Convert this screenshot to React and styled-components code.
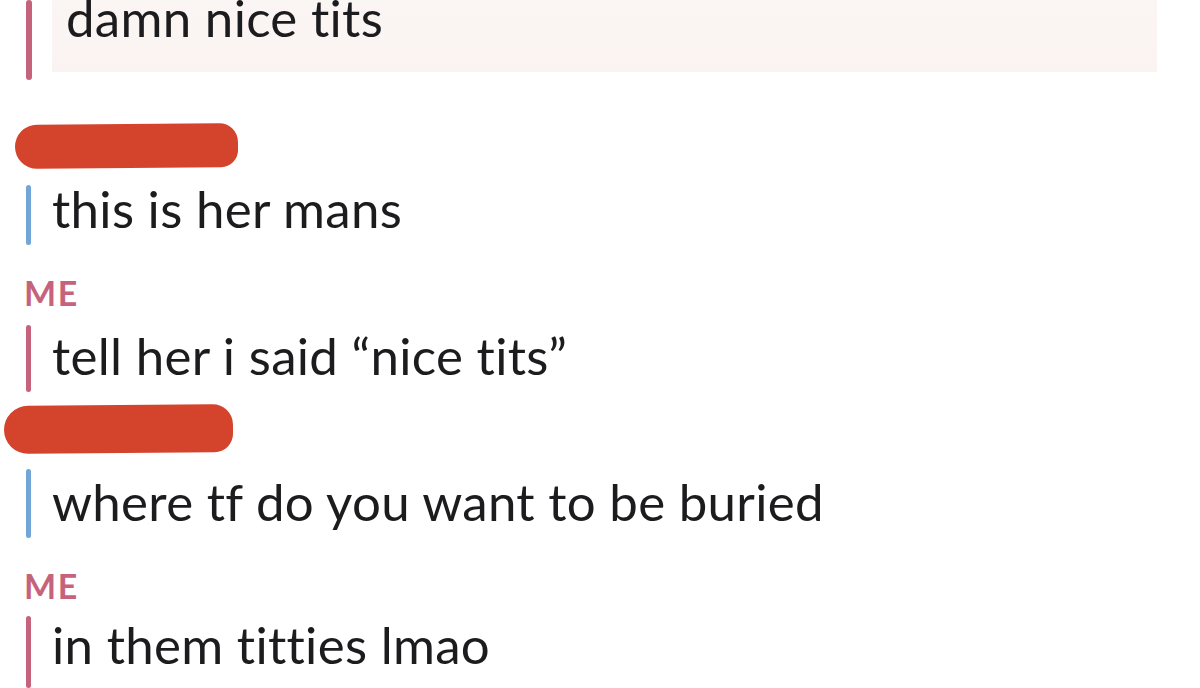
import React from "react";
import styled, { createGlobalStyle } from "styled-components";

const GlobalStyle = createGlobalStyle`
  html, body {
    margin: 0;
    padding: 0;
    background: #ffffff;
    overflow: hidden;
  }
  body {
    font-family: "Lato", "Open Sans", sans-serif;
    color: #1c1c1e;
  }
`;

const colors = {
  me: "#c6637c",
  them: "#72a6d8",
  redact: "#d4442c",
};

const Page = styled.div`
  width: 1200px;
  height: 688px;
  padding-left: 26px;
  box-sizing: border-box;
  display: flex;
  flex-direction: column;
`;

const TopRow = styled.div`
  display: flex;
  align-items: flex-start;
  height: 80px;
`;

const Bar = styled.div`
  flex: none;
  width: ${({ $w }) => $w || 5}px;
  height: ${({ $h }) => $h || 58}px;
  border-radius: 3px;
  background: ${({ $color }) => $color};
`;

const Highlight = styled.div`
  margin-left: 20px;
  width: 1105px;
  height: 72px;
  background: linear-gradient(180deg, #faf6f4 0%, #fbf3f2 100%);
  display: flex;
  align-items: flex-start;
  padding-left: 14px;
  box-sizing: border-box;
`;

const MessageText = styled.div`
  font-size: 51px;
  line-height: 58px;
  letter-spacing: 0.3px;
  white-space: nowrap;
  margin-top: ${({ $top }) => $top || 0}px;
`;

const Redact = styled.div`
  width: ${({ $w }) => $w}px;
  height: ${({ $h }) => $h || 46}px;
  margin-top: ${({ $top }) => $top}px;
  margin-left: ${({ $left }) => $left}px;
  background: ${colors.redact};
  border-radius: 26px 22px 20px 26px;
  transform: rotate(-0.5deg);
`;

const Message = styled.div`
  display: flex;
  align-items: flex-start;
  gap: 21px;
  margin-top: ${({ $top }) => $top}px;
`;

const Label = styled.div`
  margin-top: ${({ $top }) => $top}px;
  margin-left: -2px;
  font-size: 34px;
  line-height: 30px;
  font-weight: 700;
  letter-spacing: 1.5px;
  color: ${colors.me};
`;

export default function App() {
  return (
    <>
      <GlobalStyle />
      <Page>
        <TopRow>
          <Bar $color={colors.me} $w={6} $h={80} />
          <Highlight>
            <MessageText $top={-11}>damn nice tits</MessageText>
          </Highlight>
        </TopRow>

        <Redact $w={223} $top={44} $left={-11} />
        <Message $top={17}>
          <Bar $color={colors.them} $h={60} />
          <MessageText $top={-5}>this is her mans</MessageText>
        </Message>

        <Label $top={33}>ME</Label>
        <Message $top={17}>
          <Bar $color={colors.me} $h={67} />
          <MessageText $top={2}>tell her i said “nice tits”</MessageText>
        </Message>

        <Redact $w={229} $h={50} $top={13} $left={-22} />
        <Message $top={16}>
          <Bar $color={colors.them} $h={69} />
          <MessageText $top={4}>where tf do you want to be buried</MessageText>
        </Message>

        <Label $top={33}>ME</Label>
        <Message $top={15}>
          <Bar $color={colors.me} $h={72} />
          <MessageText $top={0}>in them titties lmao</MessageText>
        </Message>
      </Page>
    </>
  );
}
